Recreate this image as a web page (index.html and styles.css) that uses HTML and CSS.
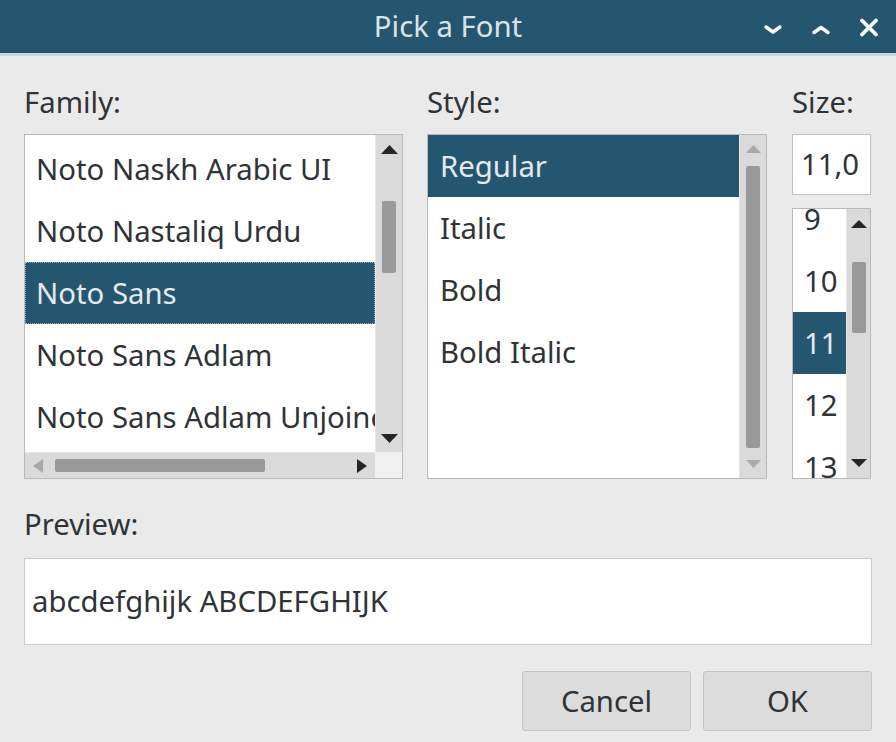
FILE: index.html
```html
<!DOCTYPE html>
<html lang="en">
<head>
<meta charset="utf-8">
<title>Pick a Font</title>
<link rel="stylesheet" href="styles.css">
</head>
<body>
<div class="window">
  <header class="titlebar">
    <div class="tb-side"></div>
    <div class="title">Pick a Font</div>
    <div class="tb-side tb-buttons">
      <span class="wbtn"><svg width="20" height="20" viewBox="0 0 20 20"><path d="M3 10 L10 15 L17 10" fill="none" stroke="#ffffff" stroke-width="3.4" stroke-linecap="round" stroke-linejoin="round"/></svg></span>
      <span class="wbtn"><svg width="20" height="20" viewBox="0 0 20 20"><path d="M3 15.5 L10 10.5 L17 15.5" fill="none" stroke="#ffffff" stroke-width="3.4" stroke-linecap="round" stroke-linejoin="round"/></svg></span>
      <span class="wbtn"><svg width="20" height="20" viewBox="0 0 20 20"><path d="M3 3.5 L17 17.5 M17 3.5 L3 17.5" fill="none" stroke="#ffffff" stroke-width="3.8" stroke-linecap="round"/></svg></span>
    </div>
  </header>

  <main class="content">
    <div class="columns">
      <section class="col">
        <div class="label">Family:</div>
        <div class="listbox family-box">
          <div class="viewport">
            <ul class="items" style="margin-top:3px">
              <li>Noto Naskh Arabic UI</li>
              <li>Noto Nastaliq Urdu</li>
              <li class="selected focused">Noto Sans</li>
              <li>Noto Sans Adlam</li>
              <li>Noto Sans Adlam Unjoined</li>
            </ul>
          </div>
          <div class="vscroll">
            <div class="sb-btn"><svg width="17" height="9" viewBox="0 0 17 9"><polygon points="0,9 8.5,0 17,9" class="arrow-dark"/></svg></div>
            <div class="sb-track"><div class="thumb" style="margin-top:38px;height:72px"></div></div>
            <div class="sb-btn"><svg width="17" height="9" viewBox="0 0 17 9"><polygon points="0,0 17,0 8.5,9" class="arrow-dark"/></svg></div>
          </div>
          <div class="hscroll">
            <div class="sb-btn-h"><svg width="10" height="14" viewBox="0 0 10 14"><polygon points="10,0 10,14 0,7" class="arrow-grey"/></svg></div>
            <div class="sb-track-h"><div class="thumb-h" style="margin-left:4px;width:210px"></div></div>
            <div class="sb-btn-h"><svg width="10" height="14" viewBox="0 0 10 14"><polygon points="0,0 10,7 0,14" class="arrow-dark"/></svg></div>
          </div>
          <div class="corner"></div>
        </div>
      </section>

      <section class="col">
        <div class="label">Style:</div>
        <div class="listbox style-box">
          <div class="viewport">
            <ul class="items style-items">
              <li class="selected">Regular</li>
              <li>Italic</li>
              <li>Bold</li>
              <li>Bold Italic</li>
            </ul>
          </div>
          <div class="vscroll">
            <div class="sb-btn"><svg width="15" height="8" viewBox="0 0 15 8"><polygon points="0,8 7.5,0 15,8" class="arrow-grey"/></svg></div>
            <div class="sb-track"><div class="thumb" style="margin-top:3px;height:282px"></div></div>
            <div class="sb-btn"><svg width="15" height="8" viewBox="0 0 15 8"><polygon points="0,0 15,0 7.5,8" class="arrow-grey"/></svg></div>
          </div>
        </div>
      </section>

      <section class="col">
        <div class="label">Size:</div>
        <div class="size-entry">11,0</div>
        <div class="listbox size-box">
          <div class="viewport">
            <ul class="items" style="margin-top:-21px">
              <li>9</li>
              <li>10</li>
              <li class="selected">11</li>
              <li>12</li>
              <li>13</li>
            </ul>
          </div>
          <div class="vscroll size-scroll">
            <div class="sb-btn tall"><svg width="16" height="8" viewBox="0 0 16 8"><polygon points="0,8 8,0 16,8" class="arrow-dark"/></svg></div>
            <div class="sb-track"><div class="thumb" style="margin-top:23px;height:71px"></div></div>
            <div class="sb-btn tall"><svg width="16" height="8" viewBox="0 0 16 8"><polygon points="0,0 16,0 8,8" class="arrow-dark"/></svg></div>
          </div>
        </div>
      </section>
    </div>

    <div class="label preview-label">Preview:</div>
    <div class="preview">abcdefghijk ABCDEFGHIJK</div>

    <div class="actions">
      <button class="btn" type="button">Cancel</button>
      <button class="btn" type="button">OK</button>
    </div>
  </main>
</div>
</body>
</html>
```

FILE: styles.css
```css
* {
  box-sizing: border-box;
}

html, body {
  margin: 0;
  padding: 0;
}

body {
  width: 896px;
  height: 742px;
  overflow: hidden;
  background: #eaeaea;
  font-family: "Noto Sans", "DejaVu Sans", sans-serif;
  font-size: 29.3px;
  color: #2f3337;
}

.titlebar {
  height: 56px;
  background: #255670;
  border-bottom: 3px solid #cdd5d9;
  display: grid;
  grid-template-columns: 1fr auto 1fr;
  align-items: stretch;
}

.title {
  line-height: 53px;
  color: #dce3e7;
  white-space: nowrap;
}

.tb-buttons {
  display: flex;
  justify-content: flex-end;
  padding-right: 3px;
}

.wbtn {
  width: 48px;
  height: 53px;
  display: flex;
  align-items: center;
  justify-content: center;
}

.content {
  padding: 28px 24px 0 24px;
}

.columns {
  display: grid;
  grid-template-columns: 379px 340px 80px;
  column-gap: 24px;
}

.columns .col:last-child {
  margin-left: 1px;
}

.label {
  height: 36px;
  line-height: 36px;
  margin-bottom: 14px;
  white-space: nowrap;
}

.listbox {
  border: 1px solid #b9b9b9;
  background: #ffffff;
  overflow: hidden;
}

.family-box {
  height: 345px;
  display: grid;
  grid-template-columns: 350px 27px;
  grid-template-rows: 317px 26px;
}

.style-box {
  height: 345px;
  display: grid;
  grid-template-columns: 311px 27px;
}

.size-box {
  height: 271px;
  display: grid;
  grid-template-columns: 53px 25px;
}

.viewport {
  overflow: hidden;
  min-width: 0;
}

.items {
  list-style: none;
  margin: 0;
  padding: 0;
}

.items li {
  height: 62px;
  line-height: 62px;
  padding-left: 11px;
  white-space: nowrap;
  color: #2f3337;
}

.style-items li {
  padding-left: 12px;
}

.items li.selected {
  background: #255670;
  color: #e3e9ed;
}

.items li.focused {
  outline: 1px dotted #8fb0c2;
  outline-offset: -1px;
}

.vscroll {
  background: #dadada;
  display: flex;
  flex-direction: column;
  border-left: 1px solid #e6e6e6;
}

.sb-btn {
  height: 28px;
  flex: none;
  display: flex;
  align-items: center;
  justify-content: center;
}

.sb-btn.tall {
  height: 30px;
}

.sb-track {
  flex: 1;
  display: flex;
  flex-direction: column;
  align-items: center;
}

.thumb {
  width: 14px;
  background: #999999;
  border-radius: 2px;
  flex: none;
}

.hscroll {
  background: #dadada;
  display: flex;
  border-top: 1px solid #e6e6e6;
}

.sb-btn-h {
  width: 26px;
  flex: none;
  display: flex;
  align-items: center;
  justify-content: center;
}

.sb-track-h {
  flex: 1;
  display: flex;
  align-items: center;
}

.thumb-h {
  height: 13px;
  background: #999999;
  border-radius: 2px;
  flex: none;
}

.corner {
  background: #f1f1f1;
}

.arrow-dark {
  fill: #232629;
}

.arrow-grey {
  fill: #a9a9a9;
}

.size-entry {
  height: 61px;
  line-height: 59px;
  border: 1px solid #c2c2c2;
  background: #ffffff;
  padding-left: 8px;
  margin-bottom: 13px;
  white-space: nowrap;
}

.preview-label {
  margin-top: 27px;
  margin-bottom: 16px;
}

.preview {
  height: 87px;
  line-height: 85px;
  border: 1px solid #c9c9c9;
  background: #ffffff;
  padding-left: 7px;
  white-space: nowrap;
}

.actions {
  margin-top: 26px;
  display: flex;
  justify-content: flex-end;
  gap: 12px;
}

.btn {
  width: 169px;
  height: 60px;
  background: #dcdcdc;
  border: 1px solid #c4c4c4;
  border-radius: 3px;
  font-family: "Noto Sans", "DejaVu Sans", sans-serif;
  font-size: 29.3px;
  color: #2f3337;
  padding: 0;
}
```
